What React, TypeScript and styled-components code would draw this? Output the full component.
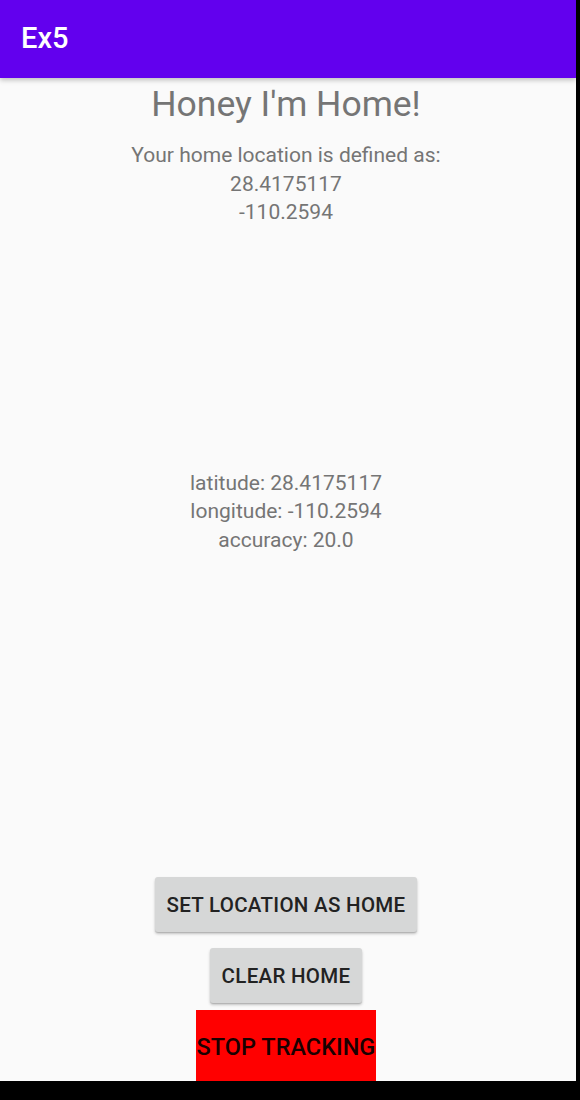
import React from "react";
import styled, { createGlobalStyle } from "styled-components";

const Global = createGlobalStyle`
  html, body { margin: 0; padding: 0; background: #000; }
  body { font-family: Roboto, "Noto Sans", sans-serif; }
`;

const Device = styled.div`
  width: 580px;
  height: 1100px;
  background: #000;
  display: flex;
  align-items: flex-start;
`;

const Screen = styled.div`
  width: 576px;
  height: 1081px;
  background: #fafafa;
  display: flex;
  flex-direction: column;
  overflow: hidden;
`;

const AppBar = styled.header`
  height: 78px;
  flex: 0 0 78px;
  background: #6200ee;
  display: flex;
  align-items: center;
  padding-left: 21px;
  box-shadow: 0 2px 5px rgba(0, 0, 0, 0.25);
  position: relative;
  z-index: 1;
  color: #fff;
  font-size: 29px;
  font-weight: 500;
  box-sizing: border-box;
  padding-bottom: 2px;
`;

const Content = styled.main`
  flex: 1;
  display: flex;
  flex-direction: column;
  align-items: center;
  color: #757575;
  text-align: center;
  padding-right: 4px;
`;

const Title = styled.h1`
  margin: 6px 0 0;
  font-size: 35.5px;
  font-weight: 400;
  line-height: 40px;
`;

const Lines = styled.p<{ $top: number }>`
  margin: ${(p) => p.$top}px 0 0;
  font-size: 21px;
  line-height: 28.5px;
`;

const Actions = styled.div`
  margin-top: auto;
  display: flex;
  flex-direction: column;
  align-items: center;
  margin-bottom: -3px;
`;

const Button = styled.button<{ $danger?: boolean }>`
  font-family: Roboto, sans-serif;
  font-weight: 500;
  font-size: ${(p) => (p.$danger ? "23.5px" : "20.5px")};
  letter-spacing: ${(p) => (p.$danger ? "0" : "0.3px")};
  color: ${(p) => (p.$danger ? "#1a0000" : "#222")};
  border: none;
  cursor: pointer;
  background: ${(p) => (p.$danger ? "#ff0000" : "#d6d7d7")};
  border-radius: ${(p) => (p.$danger ? "0" : "3px")};
  box-shadow: ${(p) =>
    p.$danger ? "none" : "0 2px 3px rgba(0,0,0,0.22), 0 1px 1px rgba(0,0,0,0.12)"};
  height: ${(p) => (p.$danger ? "74px" : "55px")};
  padding: ${(p) => (p.$danger ? "0 1px" : "0 12px")};
  margin-top: ${(p) => (p.$danger ? "7px" : "16px")};
  text-transform: uppercase;
  &:first-child { margin-top: 0; }
`;

export default function App() {
  return (
    <>
      <Global />
      <Device>
        <Screen>
          <AppBar>Ex5</AppBar>
          <Content>
            <Title>Honey I'm Home!</Title>
            <Lines $top={17}>
              Your home location is defined as:
              <br />
              28.4175117
              <br />
              -110.2594
            </Lines>
            <Lines $top={242}>
              latitude: 28.4175117
              <br />
              longitude: -110.2594
              <br />
              accuracy: 20.0
            </Lines>
            <Actions>
              <Button>Set location as home</Button>
              <Button>Clear home</Button>
              <Button $danger>Stop tracking</Button>
            </Actions>
          </Content>
        </Screen>
      </Device>
    </>
  );
}
